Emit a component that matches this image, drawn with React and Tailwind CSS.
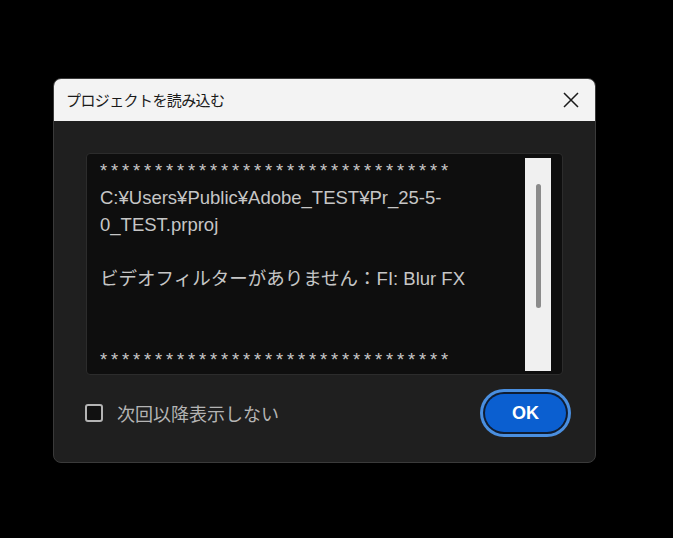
export default function App() {
  const stars = "********************************";
  return (
    <div className="w-[673px] h-[538px] bg-black pt-[78px] pl-[53px]">
      <div className="w-[543px] h-[385px] rounded-[8px] border border-[#3a3a3a] bg-[#1f1f1f] overflow-hidden flex flex-col">
        <div className="h-[42px] bg-[#f3f3f3] flex items-center justify-between pl-[12px] pr-[16px]">
          <span
            className="text-[15px] text-[#1a1a1a] tracking-[-0.6px]"
            style={{ fontFamily: '"Noto Sans CJK JP", sans-serif' }}
          >
            プロジェクトを読み込む
          </span>
          <svg width="16" height="16" viewBox="0 0 16 16" className="text-[#1a1a1a]">
            <path d="M1 1 L15 15 M15 1 L1 15" stroke="currentColor" strokeWidth="1.5" fill="none" />
          </svg>
        </div>
        <div className="px-8 pt-8">
          <div className="h-[222px] rounded-[4px] border border-[#2c2c2c] bg-[#0e0e0e] flex">
            <div
              className="flex-1 pl-[13px] pt-[3px] text-[18.5px] leading-[27px] text-[#c6c6c6]"
              style={{ fontFamily: '"Liberation Sans", "Noto Sans CJK JP", sans-serif' }}
            >
              <div className="tracking-[3.8px]">{stars}</div>
              <div>C:¥Users¥Public¥Adobe_TEST¥Pr_25-5-</div>
              <div>0_TEST.prproj</div>
              <div>&nbsp;</div>
              <div>ビデオフィルターがありません：FI: Blur FX</div>
              <div>&nbsp;</div>
              <div>&nbsp;</div>
              <div className="tracking-[3.8px]">{stars}</div>
            </div>
            <div className="w-[26px] mt-[4px] mb-[3px] mr-[11px] bg-[#f0f0f0] flex justify-center pt-[26px]">
              <div className="w-[5px] h-[124px] rounded-full bg-[#8b8b8b]" />
            </div>
          </div>
        </div>
        <div className="flex items-center justify-between pl-[31px] pr-[29px] pt-[19px]">
          <div className="flex items-center gap-[14px]">
            <div className="w-[18px] h-[18px] rounded-[3px] border-2 border-[#b4b4b4] bg-[#111111]" />
            <span
              className="text-[18px] text-[#b4b4b4]"
              style={{ fontFamily: '"Noto Sans CJK JP", sans-serif' }}
            >
              次回以降表示しない
            </span>
          </div>
          <button
            className="w-[81px] h-[38px] rounded-full bg-[#0b5fd0] text-white text-[18px] font-bold shadow-[0_0_0_2px_#0f1d33,0_0_0_5px_#4a8fe0]"
            style={{ fontFamily: '"Liberation Sans", sans-serif' }}
          >
            OK
          </button>
        </div>
      </div>
    </div>
  );
}
